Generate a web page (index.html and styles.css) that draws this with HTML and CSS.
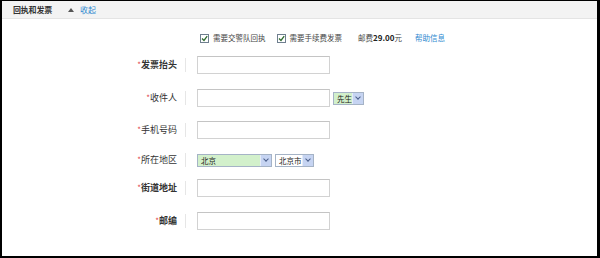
FILE: index.html
```html
<!DOCTYPE html>
<html lang="zh-CN">

<head>
  <meta charset="UTF-8" />
  <title>回执和发票</title>
  <link rel="stylesheet" href="styles.css">
</head>

<body>
  <div class="frame">
    <div class="bar">
      <span class="bar-title">回执和发票</span>
      <a class="toggle"><span class="tri"></span>收起</a>
    </div>

    <div class="options">
      <span class="opt">
        <span class="check"><svg width="7" height="7" viewBox="0 0 7 7"><path d="M1 3.5 L3 5.5 L6.2 1.2" fill="none" stroke="#2f6b2f" stroke-width="1.3"/></svg></span>
        需要交警队回执
      </span>
      <span class="opt">
        <span class="check"><svg width="7" height="7" viewBox="0 0 7 7"><path d="M1 3.5 L3 5.5 L6.2 1.2" fill="none" stroke="#2f6b2f" stroke-width="1.3"/></svg></span>
        需要手续费发票
      </span>
      <span class="fee">邮费<b>29.00</b>元</span>
      <a class="help">帮助信息</a>
    </div>

    <div class="form">
      <div class="row">
        <span class="label bold"><i>*</i>发票抬头</span>
        <span class="field"></span>
      </div>
      <div class="row">
        <span class="label"><i>*</i>收件人</span>
        <span class="field"></span>
        <span class="select small"><span class="select-text">先生</span><span class="arrow"></span></span>
      </div>
      <div class="row">
        <span class="label"><i>*</i>手机号码</span>
        <span class="field"></span>
      </div>
      <div class="row">
        <span class="label"><i>*</i>所在地区</span>
        <span class="select wide"><span class="select-text">北京</span><span class="arrow"></span></span>
        <span class="select city"><span class="select-text">北京市</span><span class="arrow"></span></span>
      </div>
      <div class="row">
        <span class="label bold"><i>*</i>街道地址</span>
        <span class="field"></span>
      </div>
      <div class="row">
        <span class="label bold"><i>*</i>邮编</span>
        <span class="field"></span>
      </div>
    </div>
  </div>
</body>

</html>
```

FILE: styles.css
```css
body {
  margin: 0;
  font-family: "Noto Sans CJK SC", "DejaVu Sans", sans-serif;
  color: #333;
  background: #fff;
}

.frame {
  width: 600px;
  height: 258px;
  box-sizing: border-box;
  border-style: solid;
  border-color: #000;
  border-width: 1px 3px 2px 2px;
  background: #fff;
  overflow: hidden;
}

/* ===== header bar ===== */

.bar {
  height: 17px;
  background: #f3f3f3;
  border-bottom: 1px solid #e4e4e4;
  display: flex;
  align-items: center;
  padding-left: 11px;
  font-size: 8px;
  line-height: 1;
}

.bar-title {
  font-weight: bold;
  color: #333;
  letter-spacing: -0.2px;
}

.toggle {
  display: flex;
  align-items: center;
  margin-left: 16px;
  color: #2f8ad0;
}

.tri {
  width: 0;
  height: 0;
  border-left: 3px solid transparent;
  border-right: 3px solid transparent;
  border-bottom: 4px solid #555;
  margin-right: 6px;
}

/* ===== option line ===== */

.options {
  display: flex;
  align-items: center;
  height: 10px;
  margin-top: 14px;
  padding-left: 198px;
  font-size: 7.5px;
  line-height: 1;
  color: #444;
}

.opt {
  display: flex;
  align-items: center;
  gap: 4px;
  margin-right: 11px;
}

.check {
  width: 9px;
  height: 9px;
  box-sizing: border-box;
  border: 1px solid #6f7f8f;
  background: #fff;
  display: flex;
  align-items: center;
  justify-content: center;
}

.fee {
  margin-left: 5px;
}

.fee b {
  font-size: 8px;
  color: #222;
}

.help {
  margin-left: 13px;
  color: #2f8ad0;
}

/* ===== form ===== */

.form {
  display: flex;
  flex-direction: column;
}

.row {
  display: flex;
  align-items: center;
  height: 18px;
  margin-top: 14px;
}

.row:nth-child(1) { margin-top: 13px; }
.row:nth-child(2) { margin-top: 15px; }
.row:nth-child(4) { margin-top: 12px; }
.row:nth-child(5) { margin-top: 10px; }
.row:nth-child(6) { margin-top: 15px; }

.label {
  width: 184px;
  box-sizing: border-box;
  padding-right: 8px;
  text-align: right;
  font-size: 9px;
  line-height: 14px;
  color: #333;
  border-right: 1px solid #e6e6e6;
}

.label.bold {
  font-weight: bold;
}

.label i {
  font-style: normal;
  font-weight: normal;
  color: #e0474c;
  font-size: 8px;
}

.field {
  width: 133px;
  height: 18px;
  box-sizing: border-box;
  margin-left: 11px;
  border: 1px solid #d2d2d2;
  border-top-color: #c4c4c4;
  background: #fff;
}

.select {
  display: flex;
  height: 13px;
  box-sizing: border-box;
  border: 1px solid #a5b3c6;
  background: #d2f0cb;
  font-size: 7.5px;
  line-height: 11px;
  color: #222;
}

.select-text {
  flex: 1;
  padding-left: 3px;
  white-space: nowrap;
}

.arrow {
  width: 10px;
  background: #c6d4f2;
  border-left: 1px solid #e4ebf8;
  position: relative;
}

.arrow::after {
  content: "";
  position: absolute;
  left: 3px;
  top: 2px;
  width: 3px;
  height: 3px;
  border-right: 1.3px solid #4a5e8a;
  border-bottom: 1.3px solid #4a5e8a;
  transform: rotate(45deg);
}

.select.small {
  width: 31px;
  margin-left: 3px;
}

.select.wide {
  width: 75px;
  margin-left: 11px;
}

.select.city {
  width: 39px;
  margin-left: 3px;
  background: #fff;
}
```
